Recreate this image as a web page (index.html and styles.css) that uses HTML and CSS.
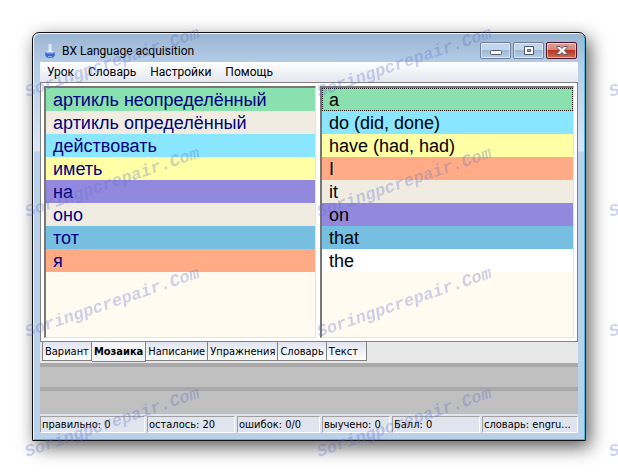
FILE: index.html
```html
<!DOCTYPE html>
<html lang="ru">
<head>
    <meta charset="UTF-8">
    <meta name="viewport" content="width=device-width, initial-scale=1.0">
    <title>BX Language acquisition</title>
    <link rel="stylesheet" href="styles.css">
</head>
<body>
    <div class="window">
        <header class="titlebar">
            <svg class="app-icon" width="12" height="16" viewBox="0 0 12 16">
                <path d="M4.500 1h3v6l3 3q2 5-4.500 5t-4.500-5l3-3z" fill="#e4ebf5" stroke="#c3d0e2" stroke-width=".8"/>
                <path d="M1.200 9.500h9.600q1 5.500-4.800 5.500t-4.800-5.500z" fill="#3a66c8"/>
                <path d="M2.500 9.500h7v1h-7z" fill="#9fc4f5"/>
                <path d="M4 13.500h4" stroke="#8fb4f4"/>
            </svg>
            <h1>BX Language acquisition</h1>
            <div class="controls">
                <button class="control" aria-label="Свернуть">
                    <svg width="12" height="11" viewBox="0 0 12 11"><rect x=".5" y="5.500" width="11" height="4" rx="1" fill="#fff" stroke="#535666"/></svg>
                </button>
                <button class="control" aria-label="Развернуть">
                    <svg width="12" height="11" viewBox="0 0 12 11"><path d="M1.500 1.500h9v8h-9zM4.500 4.500v2h3v-2z" fill="#fff" fill-rule="evenodd" stroke="#535666"/></svg>
                </button>
                <button class="control close" aria-label="Закрыть">
                    <svg width="12" height="11" viewBox="0 0 12 11"><path d="M1 1.500h3l2 2 2-2h3v1L8.300 5.500 11 8.500v1H8l-2-2-2 2H1v-1l2.700-3L1 2.500z" fill="#fff" stroke="#535666"/></svg>
                </button>
            </div>
        </header>

        <div class="client">
            <nav class="menu">
                <button>Урок</button>
                <button>Словарь</button>
                <button>Настройки</button>
                <button>Помощь</button>
            </nav>

            <main class="page">
                <ul class="words russian">
                    <li class="green">артикль неопределённый</li>
                    <li class="beige">артикль определённый</li>
                    <li class="cyan">действовать</li>
                    <li class="yellow">иметь</li>
                    <li class="violet">на</li>
                    <li class="beige">оно</li>
                    <li class="blue">тот</li>
                    <li class="coral">я</li>
                </ul>
                <ul class="words english">
                    <li class="green focused">a</li>
                    <li class="cyan">do (did, done)</li>
                    <li class="yellow">have (had, had)</li>
                    <li class="coral">I</li>
                    <li class="beige">it</li>
                    <li class="violet">on</li>
                    <li class="blue">that</li>
                    <li class="white">the</li>
                </ul>
            </main>

            <div class="tabs">
                <button>Вариант</button>
                <button class="active">Мозаика</button>
                <button>Написание</button>
                <button>Упражнения</button>
                <button>Словарь</button>
                <button class="last">Текст</button>
            </div>

            <div class="bar"></div>
            <div class="bar"></div>

            <footer class="status">
                <span>правильно: 0</span>
                <span>осталось: 20</span>
                <span>ошибок: 0/0</span>
                <span>выучено: 0</span>
                <span>Балл: 0</span>
                <span>словарь: engru...</span>
            </footer>
        </div>
    </div>

    <svg class="watermark" width="100%" height="100%" aria-hidden="true">
        <defs>
            <pattern id="mark" x="18" y="-15" width="292" height="120" patternUnits="userSpaceOnUse">
                <text transform="translate(9 112) rotate(-19)">Soringpcrepair.Com</text>
            </pattern>
        </defs>
        <rect width="100%" height="100%" fill="url(#mark)"/>
    </svg>
</body>
</html>
```
FILE: styles.css
```css
* {
    box-sizing: border-box;
}
body {
    display: flex;
    min-height: 100vh;
    margin: 0;
    padding: 32px;
    background: #fff;
    color: #000;
    font-family: "DejaVu Sans Condensed", "DejaVu Sans", sans-serif;
    font-size: 11px;
}
button {
    margin: 0;
    padding: 0;
    border: none;
    background: none;
    color: inherit;
    font: inherit;
}

/* window frame */
.window {
    flex: 1;
    display: flex;
    flex-direction: column;
    min-width: 0;
    padding: 0 6px 6px;
    border: 1px solid #111;
    border-radius: 7px 7px 0 0;
    background: linear-gradient(#9ab4d1, #b4cce8 30px, #dae6f4 118px, #b9d1ea 119px);
    box-shadow: inset 1px 1px #eef5fc, inset -1px -1px #35c5e8, 4px 6px 18px rgba(0, 0, 0, 0.65);
}
.titlebar {
    display: flex;
    align-items: center;
    height: 29px;
    padding: 6px 2px 0 5px;
}
.app-icon {
    margin-right: 6px;
}
h1 {
    flex: 1;
    margin: 0;
    font: 12px Roboto, sans-serif;
}
.controls {
    display: flex;
    gap: 2px;
}
.control {
    display: flex;
    align-items: center;
    justify-content: center;
    width: 31px;
    height: 17px;
    border: 1px solid #6d819f;
    border-radius: 2px;
    background: linear-gradient(#c2d5ec 50%, #9db6d2 50%, #b8d0eb);
    box-shadow: inset 0 0 0 1px rgba(255, 255, 255, 0.5);
}
.control.close {
    border-color: #4b1727;
    background: linear-gradient(#dfa096, #d48175 50%, #b9361f 50%, #cf6b58);
}
.client {
    flex: 1;
    display: flex;
    flex-direction: column;
    margin: 0 1px 1px;
    background: #e8e8e8;
}

.menu {
    display: flex;
    gap: 14px;
    height: 20px;
    padding: 0 7px;
    background: linear-gradient(#fff, #e3e7ef);
    font: 12px Roboto, sans-serif;
}

/* word lists */
.page {
    flex: 1;
    display: grid;
    grid-template-columns: 272fr 254fr;
    gap: 4px;
    padding: 3px;
    border: 1px solid #828282;
    background: #fff;
}
.words {
    margin: 0;
    padding: 0;
    list-style: none;
    border: 1px solid #e3e3e3;
    border-top: 2px solid #777;
    border-left: 2px solid #777;
    background: #fffbf0;
    font: 18px/23px "Liberation Sans", Arial, sans-serif;
}
.words li {
    height: 23px;
    padding: 1px 0 0 7px;
}
.russian {
    color: #000080;
}
.green { background: #8ae0ae; }
.beige { background: #f0ece2; }
.cyan { background: #8ae6ff; }
.yellow { background: #ffffa6; }
.violet { background: #9289df; }
.blue { background: #76bfe0; }
.coral { background: #ffac86; }
.white { background: #fff; }
.focused {
    outline: 1px dotted #000;
    outline-offset: -1px;
}

/* bottom tabs */
.tabs {
    display: flex;
    align-items: flex-start;
    height: 21px;
    padding-left: 2px;
}
.tabs button {
    height: 19px;
    padding: 0 2px;
    border: 1px solid #828282;
    border-top: none;
    border-left: none;
    background: linear-gradient(#e0e4ee, #fff);
}
.tabs button:first-child {
    border-left: 1px solid #828282;
}
.tabs .active {
    height: 20px;
    background: #f2f4f8;
    font-weight: bold;
}
.tabs .last {
    padding-right: 8px;
}

.bar {
    height: 24px;
    border-top: 4px solid #a9a9a9;
    background: #c0c0c0;
}
.bar + .bar {
    height: 27px;
}
.status {
    display: grid;
    grid-template-columns: 105fr 88fr 83fr 68fr 88fr 96fr;
    gap: 2px;
    height: 19px;
    padding-top: 2px;
    background: #e0e4ee;
}
.status span {
    overflow: hidden;
    padding-left: 1px;
    border: 1px solid #fff;
    border-top-color: #a0a0a0;
    border-left-color: #a0a0a0;
    line-height: 15px;
    white-space: nowrap;
}

.watermark {
    position: absolute;
    inset: 0;
    pointer-events: none;
}
.watermark text {
    fill: #5a6fc8;
    fill-opacity: 0.3;
    font: italic bold 17px "Liberation Mono", monospace;
}
```
